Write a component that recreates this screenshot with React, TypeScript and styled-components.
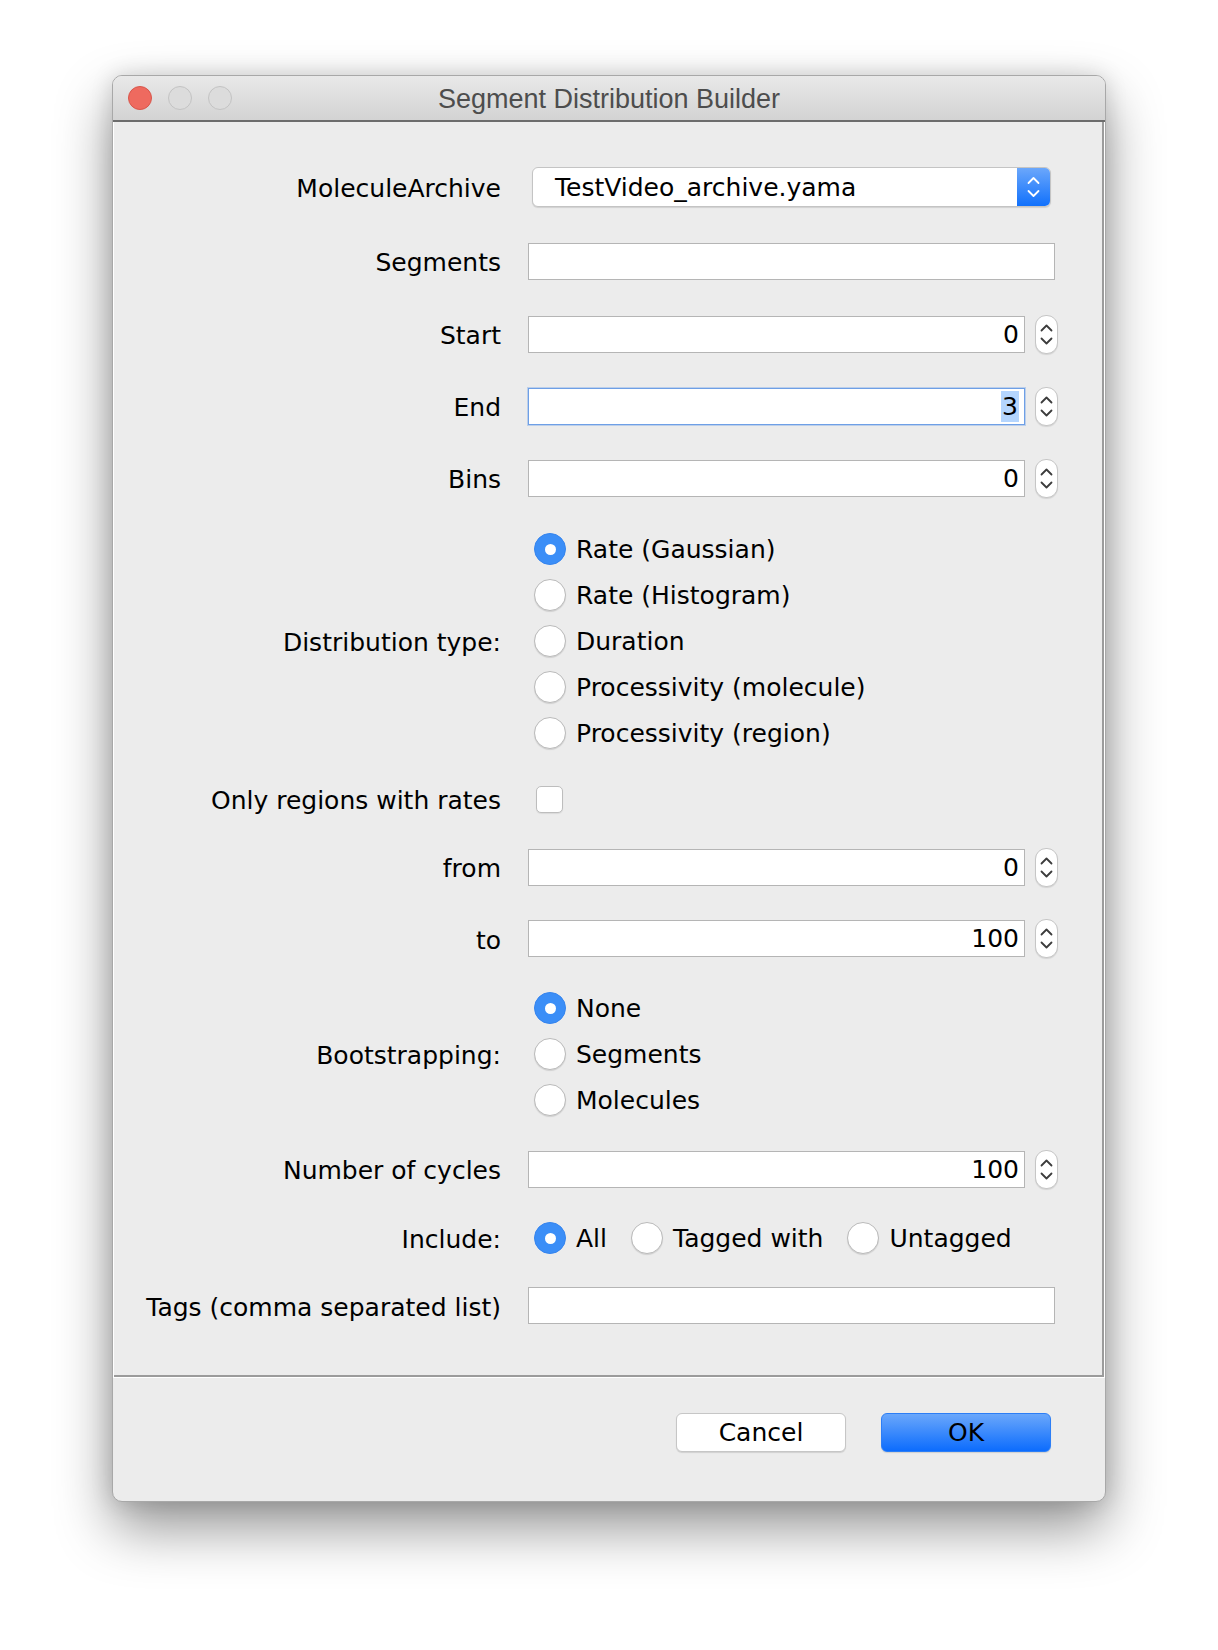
import styled, { createGlobalStyle } from "styled-components";

const GlobalStyle = createGlobalStyle`
  html, body {
    margin: 0;
    padding: 0;
    background: #fff;
  }
  body {
    font-family: "DejaVu Sans", "Liberation Sans", sans-serif;
    color: #000;
  }
`;

const Page = styled.div`
  padding: 75px 0 140px 112px;
`;

const Window = styled.div`
  width: 994px;
  box-sizing: border-box;
  border: 1px solid #a8a8a8;
  border-radius: 10px;
  background: #ececec;
  overflow: hidden;
  box-shadow: 0 26px 55px rgba(0, 0, 0, 0.42), 0 0 22px rgba(0, 0, 0, 0.14);
`;

const TitleBar = styled.div`
  height: 44px;
  display: grid;
  grid-template-columns: 1fr auto 1fr;
  align-items: center;
  background: linear-gradient(#e9e9e9, #d3d3d3);
  border-bottom: 2px solid #6c6c6c;
`;

const Lights = styled.div`
  display: flex;
  gap: 16px;
  padding-left: 15px;
`;

const Light = styled.span<{ $color: string; $edge: string }>`
  width: 24px;
  height: 24px;
  box-sizing: border-box;
  border-radius: 50%;
  background: ${({ $color }) => $color};
  border: 1px solid ${({ $edge }) => $edge};
`;

const Title = styled.div`
  font-family: "Liberation Sans", Arial, sans-serif;
  font-size: 27px;
  color: #4d4d4d;
  padding-top: 2px;
`;

const PanelFrame = styled.div`
  border-left: 1px solid #fff;
  border-right: 1px solid #fff;
`;

const Form = styled.div`
  padding: 28px 47px 37px 20px;
  border-right: 2px solid #9b9b9b;
  border-bottom: 2px solid #9b9b9b;
`;

const Row = styled.div<{ $h: number }>`
  height: ${({ $h }) => $h}px;
  display: grid;
  grid-template-columns: 367px 527px;
  column-gap: 27px;
  align-items: center;
`;

const Label = styled.div`
  text-align: right;
  font-size: 25px;
  white-space: nowrap;
  padding-top: 3px;
`;

const Combo = styled.div`
  margin-left: 4px;
  width: 519px;
  height: 40px;
  box-sizing: border-box;
  display: flex;
  align-items: stretch;
  background: #fff;
  border: 1px solid #c4c4c4;
  border-radius: 6px;
  box-shadow: 0 1px 1px rgba(0, 0, 0, 0.12);
  overflow: hidden;
`;

const ComboText = styled.div`
  flex: 1;
  display: flex;
  align-items: center;
  padding-left: 22px;
  font-size: 25px;
`;

const ComboArrow = styled.div`
  width: 33px;
  display: flex;
  align-items: center;
  justify-content: center;
  background: linear-gradient(#6ba7fb, #1171fc);
`;

const SpinRow = styled.div`
  display: flex;
  align-items: center;
`;

const Field = styled.div<{ $width?: number; $focused?: boolean }>`
  flex-shrink: 0;
  width: ${({ $width }) => $width ?? 527}px;
  height: 37px;
  box-sizing: border-box;
  display: flex;
  align-items: center;
  justify-content: flex-end;
  padding-right: 5px;
  background: #fff;
  border: 1px solid ${({ $focused }) => ($focused ? "#6e9fe6" : "#b5b5b5")};
  box-shadow: ${({ $focused }) =>
    $focused ? "0 0 0 1px rgba(100, 155, 232, 0.35)" : "none"};
  font-size: 25px;
`;

const Selected = styled.span`
  background: #b4d5fe;
  padding: 0 1px;
  line-height: 31px;
`;

const Stepper = styled.div`
  flex-shrink: 0;
  margin-left: 10px;
  width: 23px;
  height: 39px;
  box-sizing: border-box;
  border: 1px solid #c6c6c6;
  border-radius: 11px;
  background: #fff;
  box-shadow: 0 1px 1px rgba(0, 0, 0, 0.1);
  display: flex;
  align-items: center;
  justify-content: center;
`;

const RadioColumn = styled.div`
  display: flex;
  flex-direction: column;
`;

const RadioLine = styled.div`
  display: flex;
  align-items: center;
  gap: 24px;
  height: 46px;
  padding-left: 6px;
`;

const RadioItem = styled.div`
  display: flex;
  align-items: center;
  gap: 10px;
  font-size: 25px;
  white-space: nowrap;
`;

const Circle = styled.span<{ $on?: boolean }>`
  width: 32px;
  height: 32px;
  box-sizing: border-box;
  border-radius: 50%;
  display: flex;
  align-items: center;
  justify-content: center;
  background: ${({ $on }) => ($on ? "#3b8ef7" : "#fff")};
  border: 1px solid ${({ $on }) => ($on ? "#3584ee" : "#bababa")};
  box-shadow: ${({ $on }) =>
    $on ? "none" : "0 1px 1px rgba(0, 0, 0, 0.12)"};

  &::after {
    content: "";
    display: ${({ $on }) => ($on ? "block" : "none")};
    width: 11px;
    height: 11px;
    border-radius: 50%;
    background: #fff;
  }
`;

const Check = styled.span`
  margin-left: 8px;
  width: 27px;
  height: 27px;
  box-sizing: border-box;
  border-radius: 5px;
  background: #fff;
  border: 1px solid #bdbdbd;
  box-shadow: 0 1px 1px rgba(0, 0, 0, 0.08);
`;

const Footer = styled.div`
  height: 124px;
  box-sizing: border-box;
  border-top: 1px solid #fff;
  display: flex;
  justify-content: flex-end;
  align-items: flex-start;
  gap: 35px;
  padding: 35px 54px 0 0;
`;

const Button = styled.button<{ $primary?: boolean }>`
  width: 170px;
  height: 39px;
  box-sizing: border-box;
  border-radius: 6px;
  font-family: "DejaVu Sans", sans-serif;
  font-size: 25px;
  color: #000;
  padding: 0;
  border: 1px solid ${({ $primary }) => ($primary ? "#2c7ef6" : "#c6c6c6")};
  background: ${({ $primary }) =>
    $primary ? "linear-gradient(#6aa7fb, #0c6cfd)" : "#fff"};
  box-shadow: 0 1px 1px rgba(0, 0, 0, 0.12);
`;

const UpDown = ({ color, w, h }: { color: string; w: number; h: number }) => (
  <svg width={w} height={h} viewBox={`0 0 ${w} ${h}`}>
    <path
      d={`M${w / 2 - 5} ${h / 2 - 4} L${w / 2} ${h / 2 - 9} L${w / 2 + 5} ${h / 2 - 4}`}
      fill="none"
      stroke={color}
      strokeWidth="1.8"
      strokeLinecap="round"
      strokeLinejoin="round"
    />
    <path
      d={`M${w / 2 - 5} ${h / 2 + 4} L${w / 2} ${h / 2 + 9} L${w / 2 + 5} ${h / 2 + 4}`}
      fill="none"
      stroke={color}
      strokeWidth="1.8"
      strokeLinecap="round"
      strokeLinejoin="round"
    />
  </svg>
);

const Spinner = ({ value, focused }: { value: string; focused?: boolean }) => (
  <SpinRow>
    <Field $width={497} $focused={focused}>
      {focused ? <Selected>{value}</Selected> : value}
    </Field>
    <Stepper>
      <UpDown color="#3c3c3c" w={21} h={37} />
    </Stepper>
  </SpinRow>
);

const Radio = ({ label, on }: { label: string; on?: boolean }) => (
  <RadioItem>
    <Circle $on={on} />
    {label}
  </RadioItem>
);

export default function App() {
  return (
    <Page>
      <GlobalStyle />
      <Window>
        <TitleBar>
          <Lights>
            <Light $color="#ee6a5f" $edge="#d8564b" />
            <Light $color="#dcdcdc" $edge="#c3c3c3" />
            <Light $color="#dcdcdc" $edge="#c3c3c3" />
          </Lights>
          <Title>Segment Distribution Builder</Title>
          <div />
        </TitleBar>
        <PanelFrame>
          <Form>
            <Row $h={74}>
              <Label>MoleculeArchive</Label>
              <Combo>
                <ComboText>TestVideo_archive.yama</ComboText>
                <ComboArrow>
                  <UpDown color="#fff" w={33} h={38} />
                </ComboArrow>
              </Combo>
            </Row>
            <Row $h={74}>
              <Label>Segments</Label>
              <Field />
            </Row>
            <Row $h={72}>
              <Label>Start</Label>
              <Spinner value="0" />
            </Row>
            <Row $h={72}>
              <Label>End</Label>
              <Spinner value="3" focused />
            </Row>
            <Row $h={72}>
              <Label>Bins</Label>
              <Spinner value="0" />
            </Row>
            <Row $h={254}>
              <Label>Distribution type:</Label>
              <RadioColumn>
                <RadioLine>
                  <Radio label="Rate (Gaussian)" on />
                </RadioLine>
                <RadioLine>
                  <Radio label="Rate (Histogram)" />
                </RadioLine>
                <RadioLine>
                  <Radio label="Duration" />
                </RadioLine>
                <RadioLine>
                  <Radio label="Processivity (molecule)" />
                </RadioLine>
                <RadioLine>
                  <Radio label="Processivity (region)" />
                </RadioLine>
              </RadioColumn>
            </Row>
            <Row $h={62}>
              <Label>Only regions with rates</Label>
              <Check />
            </Row>
            <Row $h={74}>
              <Label>from</Label>
              <Spinner value="0" />
            </Row>
            <Row $h={69}>
              <Label>to</Label>
              <Spinner value="100" />
            </Row>
            <Row $h={162}>
              <Label>Bootstrapping:</Label>
              <RadioColumn>
                <RadioLine>
                  <Radio label="None" on />
                </RadioLine>
                <RadioLine>
                  <Radio label="Segments" />
                </RadioLine>
                <RadioLine>
                  <Radio label="Molecules" />
                </RadioLine>
              </RadioColumn>
            </Row>
            <Row $h={68}>
              <Label>Number of cycles</Label>
              <Spinner value="100" />
            </Row>
            <Row $h={70}>
              <Label>Include:</Label>
              <RadioLine>
                <Radio label="All" on />
                <Radio label="Tagged with" />
                <Radio label="Untagged" />
              </RadioLine>
            </Row>
            <Row $h={65}>
              <Label>Tags (comma separated list)</Label>
              <Field />
            </Row>
          </Form>
        </PanelFrame>
        <Footer>
          <Button>Cancel</Button>
          <Button $primary>OK</Button>
        </Footer>
      </Window>
    </Page>
  );
}
